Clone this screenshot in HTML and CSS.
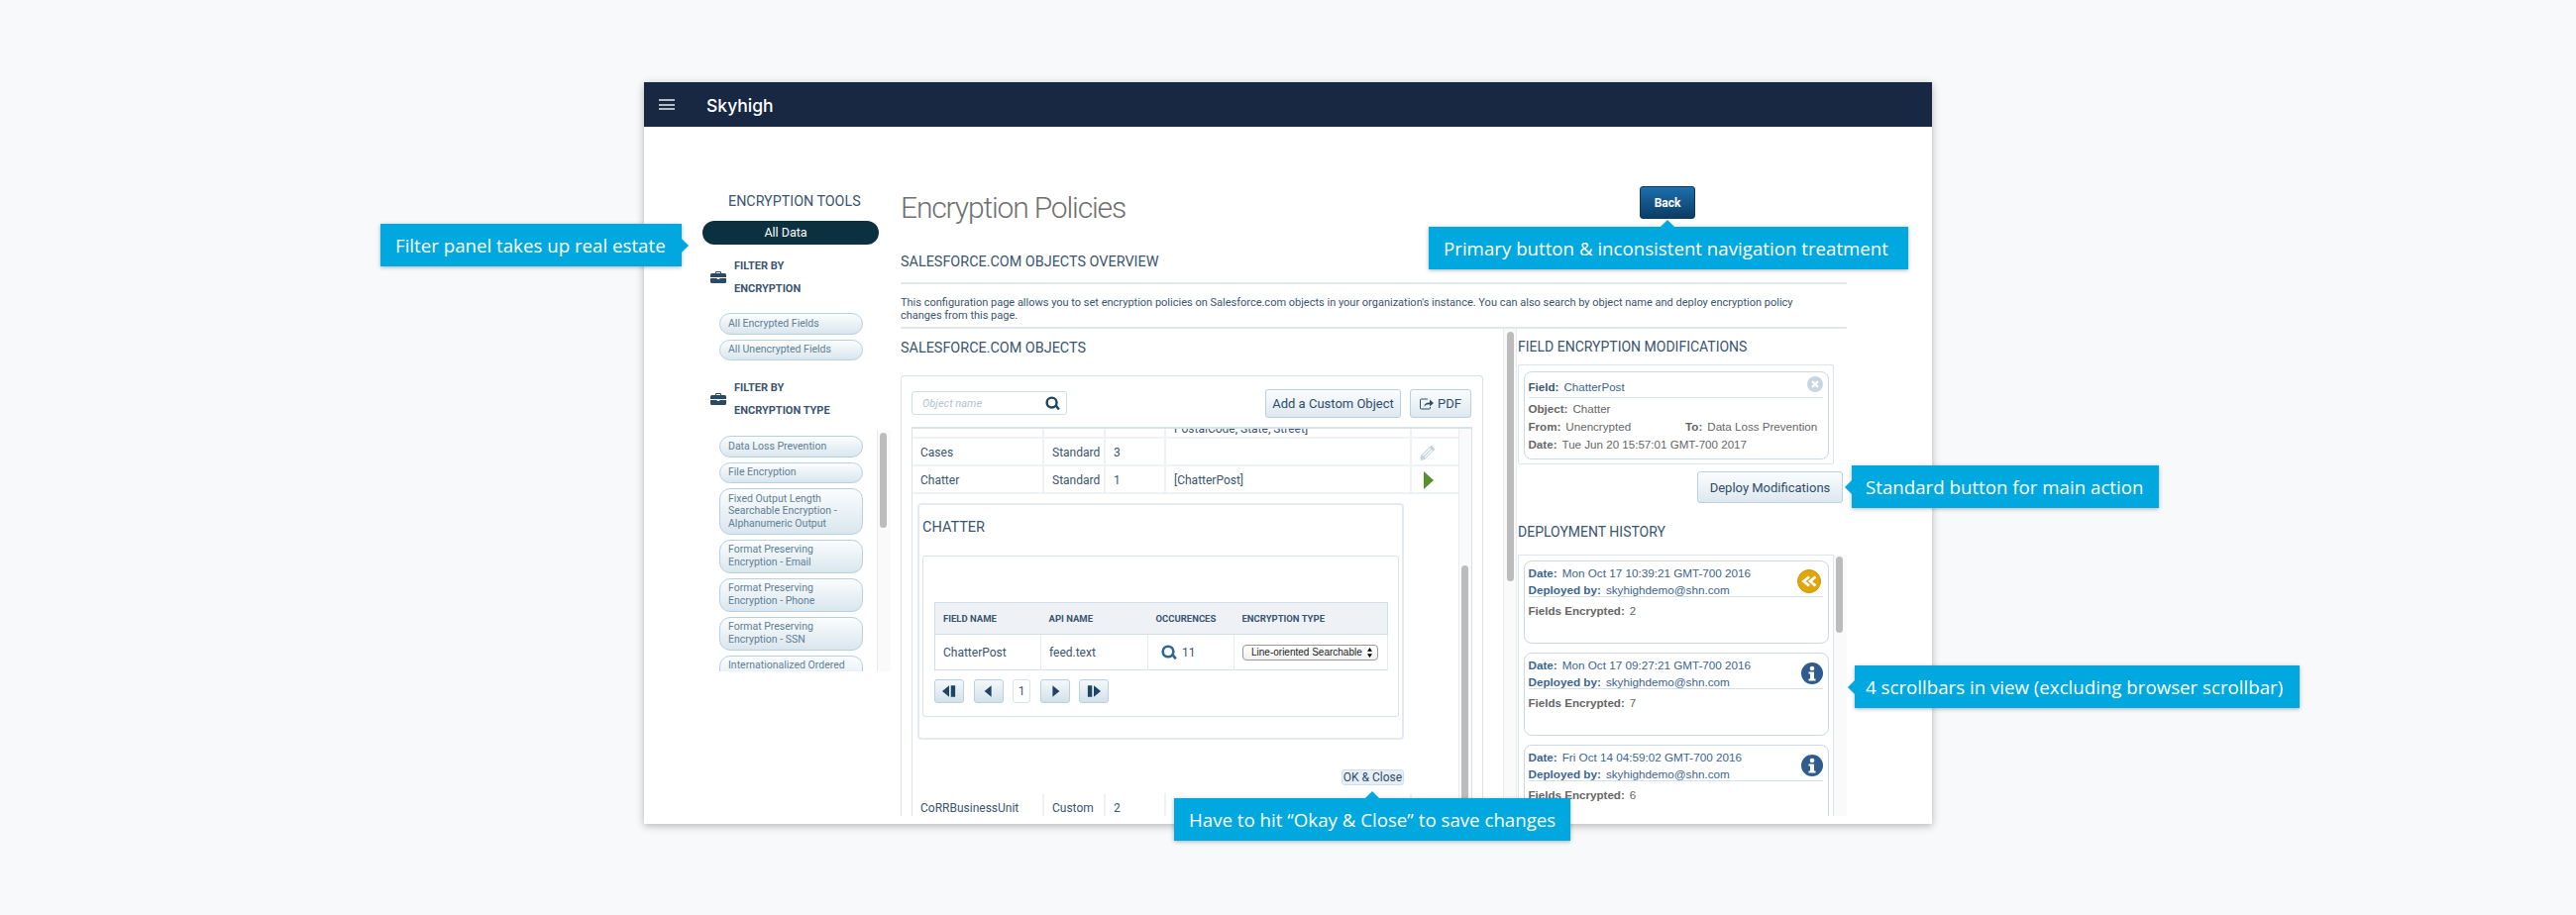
FILE: index.html
```html
<!DOCTYPE html>
<html lang="en">
<head>
    <meta charset="UTF-8">
    <title>Encryption Policies</title>
    <link rel="stylesheet" href="styles.css">
</head>
<body>
    <svg width="0" height="0" class="defs">
        <symbol id="case" viewBox="0 0 16 12"><path d="M5 2V1a1 1 0 0 1 1-1h4a1 1 0 0 1 1 1v1h3.500A1.500 1.500 0 0 1 16 3.500V6H0V3.500A1.500 1.500 0 0 1 1.500 2zM6 1v1h4V1zM0 7h6.800v1h2.400V7H16v3.500a1.500 1.500 0 0 1-1.500 1.500h-13A1.500 1.500 0 0 1 0 10.500z"/></symbol>
        <symbol id="search" viewBox="0 0 16 16"><circle cx="7" cy="7" r="5.300" fill="none" stroke="currentColor" stroke-width="2.600"/><path d="M10.500 11l2-1.800 3.300 4.300-2 1.800z"/></symbol>
        <symbol id="info" viewBox="0 0 22 22"><circle cx="11" cy="11" r="11" fill="#2f5c8c"/><circle cx="11" cy="6" r="2.300" fill="#fff"/><path d="M7.500 9.500h5.500v7h1.500v2h-7v-2H9v-5H7.500z" fill="#fff"/></symbol>
    </svg>

    <div class="window">
        <div class="topbar">
            <div class="burger"><i></i><i></i><i></i></div>
            <div class="brand">Skyhigh</div>
        </div>
        <div class="app">
            <!-- filters -->
            <div class="sidebar">
                <div class="side-title">ENCRYPTION TOOLS</div>
                <div class="all-data">All Data</div>
                <div class="filter-head">
                    <svg class="case"><use href="#case"/></svg>
                    <div>FILTER BY<br>ENCRYPTION</div>
                </div>
                <div class="chips first-chips">
                    <div class="chip">All Encrypted Fields</div>
                    <div class="chip">All Unencrypted Fields</div>
                </div>
                <div class="filter-head second">
                    <svg class="case"><use href="#case"/></svg>
                    <div>FILTER BY<br>ENCRYPTION TYPE</div>
                </div>
                <div class="side-scroll">
                    <div class="chips">
                        <div class="chip">Data Loss Prevention</div>
                        <div class="chip">File Encryption</div>
                        <div class="chip">Fixed Output Length<br>Searchable Encryption -<br>Alphanumeric Output</div>
                        <div class="chip">Format Preserving<br>Encryption - Email</div>
                        <div class="chip">Format Preserving<br>Encryption - Phone</div>
                        <div class="chip">Format Preserving<br>Encryption - SSN</div>
                        <div class="chip">Internationalized Ordered<br>Searchable Encryption</div>
                    </div>
                    <div class="track side-track"><div class="thumb"></div></div>
                </div>
            </div>

            <div class="main">
                <div class="main-head">
                    <h1>Encryption Policies</h1>
                    <button class="back">Back</button>
                </div>
                <h2 class="overview">SALESFORCE.COM OBJECTS OVERVIEW</h2>
                <p class="intro">This configuration page allows you to set encryption policies on Salesforce.com objects in your organization's instance. You can also search by object name and deploy encryption policy<br>changes from this page.</p>

                <div class="columns">
                    <div class="objects">
                        <h2>SALESFORCE.COM OBJECTS</h2>
                        <div class="panel">
                            <div class="toolbar">
                                <div class="search">
                                    <span>Object name</span>
                                    <svg><use href="#search"/></svg>
                                </div>
                                <button class="btn add">Add a Custom Object</button>
                                <button class="btn pdf">
                                    <svg viewBox="0 0 14 12"><path d="M10 4.500V1.500L14 5 10 8.500v-2.200c-3 0-4.500.8-5.500 2.500 0-3 2-4.300 5.500-4.300z" fill="#2f4d68"/><path d="M8 1H1.500A1 1 0 0 0 .5 2v8a1 1 0 0 0 1 1h8a1 1 0 0 0 1-1V9" fill="none" stroke="#2f4d68"/></svg>
                                    PDF
                                </button>
                            </div>
                            <div class="table-wrap">
                                <div class="table-scroll">
                                    <table class="objects-table">
                                        <colgroup><col class="c1"><col class="c2"><col class="c3"><col class="c4"><col class="c5"></colgroup>
                                        <tr class="cut">
                                            <td></td><td></td><td></td>
                                            <td><div class="cut-text"><span>PostalCode, State, Street]</span></div></td>
                                            <td></td>
                                        </tr>
                                        <tr>
                                            <td>Cases</td><td>Standard</td><td>3</td><td></td>
                                            <td><svg class="pencil" viewBox="0 0 16 16"><path d="M11.500.500l4 4L5 15 .500 16 1 11zM10.200 3.300L2.800 10.700l.9.9 7.400-7.400zM12 5l-7.400 7.400.9.900 7.400-7.400z" fill-rule="evenodd"/></svg></td>
                                        </tr>
                                        <tr>
                                            <td>Chatter</td><td>Standard</td><td>1</td><td>[ChatterPost]</td>
                                            <td><div class="play"></div></td>
                                        </tr>
                                        <tr>
                                            <td colspan="5" class="detail-cell">
                                                <div class="detail">
                                                    <h3>CHATTER</h3>
                                                    <div class="detail-inner">
                                                        <table class="fields">
                                                            <colgroup><col class="f1"><col class="f2"><col class="f3"><col class="f4"></colgroup>
                                                            <tr><th>FIELD NAME</th><th>API NAME</th><th>OCCURENCES</th><th>ENCRYPTION TYPE</th></tr>
                                                            <tr>
                                                                <td>ChatterPost</td>
                                                                <td>feed.text</td>
                                                                <td><div class="occ"><svg class="occ-icon"><use href="#search"/></svg>11</div></td>
                                                                <td><div class="select"><span>Line-oriented Searchable Encryption</span><svg viewBox="0 0 8 12"><path d="M4 0l3 4.500H1zM4 12L1 7.500h6z"/></svg></div></td>
                                                            </tr>
                                                        </table>
                                                        <div class="pager">
                                                            <button class="page"><svg viewBox="0 0 16 16"><path d="M8 1.500v13L0 8zM10 1.500h5v13h-5z"/></svg></button>
                                                            <button class="page"><svg viewBox="0 0 16 16"><path d="M11 1.500v13L3 8z"/></svg></button>
                                                            <div class="page-num">1</div>
                                                            <button class="page"><svg viewBox="0 0 16 16"><path d="M5 1.500v13L13 8z"/></svg></button>
                                                            <button class="page"><svg viewBox="0 0 16 16"><path d="M8 1.500v13L16 8zM1 1.500h5v13H1z"/></svg></button>
                                                        </div>
                                                    </div>
                                                </div>
                                                <div class="detail-foot"><button class="ok">OK &amp; Close</button></div>
                                            </td>
                                        </tr>
                                        <tr class="last">
                                            <td>CoRRBusinessUnit</td><td>Custom</td><td>2</td><td></td><td></td>
                                        </tr>
                                    </table>
                                </div>
                                <div class="track table-track"><div class="thumb"></div></div>
                            </div>
                        </div>
                    </div>

                    <div class="track mid-track"><div class="thumb"></div></div>

                    <div class="right">
                        <h3 class="right-title">FIELD ENCRYPTION MODIFICATIONS</h3>
                        <div class="mod-box">
                            <div class="card mod-card">
                                <div class="mod-head">
                                    <b>Field:</b><span class="blue">ChatterPost</span>
                                    <svg class="close" viewBox="0 0 16 16"><circle cx="8" cy="8" r="8" fill="#c8d6e1"/><path d="M5 5l6 6M11 5l-6 6" stroke="#fff" stroke-width="2.400"/></svg>
                                </div>
                                <div class="line"><b>Object:</b><span>Chatter</span></div>
                                <div class="line split">
                                    <div><b>From:</b><span>Unencrypted</span></div>
                                    <div class="to"><b>To:</b><span>Data Loss Prevention</span></div>
                                </div>
                                <div class="line"><b>Date:</b><span>Tue Jun 20 15:57:01 GMT-700 2017</span></div>
                            </div>
                        </div>
                        <button class="btn deploy">Deploy Modifications</button>

                        <h3 class="right-title history-title">DEPLOYMENT HISTORY</h3>
                        <div class="history">
                            <div class="history-box">
                                <div class="card hist">
                                    <div class="hist-head">
                                        <div><b>Date:</b><span>Mon Oct 17 10:39:21 GMT-700 2016</span></div>
                                        <div><b>Deployed by:</b><span>skyhighdemo@shn.com</span></div>
                                        <svg class="rollback" viewBox="0 0 24 24"><circle cx="12" cy="12" r="11.500" fill="#e0a60a" stroke="#c99507"/><path d="M12 7.500L6.500 12l5.500 4.500M18.500 7.500L13 12l5.500 4.500" fill="none" stroke="#fff" stroke-width="2.800"/></svg>
                                    </div>
                                    <div class="line"><b>Fields Encrypted:</b><span>2</span></div>
                                </div>
                                <div class="card hist">
                                    <div class="hist-head">
                                        <div><b>Date:</b><span>Mon Oct 17 09:27:21 GMT-700 2016</span></div>
                                        <div><b>Deployed by:</b><span>skyhighdemo@shn.com</span></div>
                                        <svg class="info"><use href="#info"/></svg>
                                    </div>
                                    <div class="line"><b>Fields Encrypted:</b><span>7</span></div>
                                </div>
                                <div class="card hist">
                                    <div class="hist-head">
                                        <div><b>Date:</b><span>Fri Oct 14 04:59:02 GMT-700 2016</span></div>
                                        <div><b>Deployed by:</b><span>skyhighdemo@shn.com</span></div>
                                        <svg class="info"><use href="#info"/></svg>
                                    </div>
                                    <div class="line"><b>Fields Encrypted:</b><span>6</span></div>
                                </div>
                            </div>
                            <div class="track hist-track"><div class="thumb"></div></div>
                        </div>
                    </div>
                </div>
            </div>
        </div>
    </div>

    <!-- annotations -->
    <div class="callout tip-right c-filter">Filter panel takes up real estate</div>
    <div class="callout tip-up c-primary">Primary button &amp; inconsistent navigation treatment</div>
    <div class="callout tip-left c-standard">Standard button for main action</div>
    <div class="callout tip-left c-scroll">4 scrollbars in view (excluding browser scrollbar)</div>
    <div class="callout tip-up c-okay">Have to hit “Okay &amp; Close” to save changes</div>
</body>
</html>
```

FILE: styles.css
```css
* {
    box-sizing: border-box;
}

html, body {
    height: 924px;
    overflow: hidden;
}

body {
    margin: 0;
    background-color: #f8f9fb;
    font-family: 'Roboto', sans-serif;
    color: #3a5570;
}

.defs {
    position: absolute;
}

button {
    font-family: 'Roboto', sans-serif;
    padding: 0;
}

h1, h2, h3, p {
    margin: 0;
    font-weight: 400;
}

/* window */
.window {
    width: 1300px;
    height: 749px;
    margin: 83px 0 0 650px;
    background-color: white;
    box-shadow: 0 2px 8px rgba(0,0,0,0.28);
}

.topbar {
    display: flex;
    align-items: center;
    height: 45px;
    padding-left: 15px;
    background-color: #182842;
}

.burger {
    display: flex;
    flex-direction: column;
    gap: 2.500px;
    width: 16px;
    margin-right: 32px;
}

.burger i {
    display: block;
    height: 2px;
    background-color: #b4bcc8;
}

.brand {
    margin-top: 1px;
    font-family: 'Inter', sans-serif;
    font-size: 17.500px;
    font-weight: 500;
    color: white;
}

.app {
    display: flex;
    height: 704px;
}

/* sidebar */
.sidebar {
    width: 259px;
    padding: 65px 0 0 59px;
    flex: none;
}

.side-title {
    height: 20px;
    margin-left: 26px;
    font-size: 14.300px;
    line-height: 20px;
}

.all-data {
    width: 178px;
    height: 24px;
    margin-top: 10px;
    padding-right: 10px;
    border-radius: 12px;
    background-color: #0b3141;
    color: white;
    font-size: 12.500px;
    line-height: 24px;
    text-align: center;
}

.filter-head {
    display: flex;
    align-items: center;
    gap: 8px;
    margin: 10px 0 0 8px;
    font-size: 11px;
    font-weight: 700;
    line-height: 23px;
}

.filter-head.second {
    margin-top: 16px;
}

.case {
    width: 16px;
    height: 12px;
    fill: #2b4a66;
}

.chips {
    display: flex;
    flex-direction: column;
    gap: 5px;
    width: 145px;
    margin-left: 17px;
    flex: none;
}

.first-chips {
    margin-top: 13px;
    margin-bottom: 1px;
}

.chip {
    padding: 3.500px 8px;
    border: 1px solid #b7d0e0;
    border-radius: 11px;
    background: linear-gradient(#fbfdfe, #d9e6ee);
    color: #627f94;
    font-size: 10.500px;
    line-height: 12.500px;
}

.side-scroll {
    display: flex;
    align-items: flex-start;
    height: 244px;
    margin-top: 8px;
    overflow: hidden;
}

.side-scroll .chips {
    padding-top: 6px;
}

.track {
    flex: none;
    width: 14px;
    background-color: #fafafa;
    border-left: 1px solid #e8ecef;
}

.thumb {
    width: 7px;
    margin-left: 2px;
    border-radius: 4px;
    background-color: #bcbcbc;
}

.side-track {
    height: 244px;
    margin-left: 14px;
    padding-top: 3px;
}

.side-track .thumb {
    height: 96px;
}

/* main */
.main {
    width: 955px;
}

.main-head {
    display: flex;
    justify-content: space-between;
    align-items: flex-start;
    height: 112px;
    padding: 60px 153px 0 0;
}

h1 {
    margin-top: 3px;
    font-size: 30px;
    font-weight: 300;
    line-height: 38px;
    letter-spacing: -1.150px;
    color: #707070;
}

.back {
    width: 56px;
    height: 33px;
    border: 1px solid #0b3a5f;
    border-radius: 3px;
    background: linear-gradient(#1b6fae, #0c3c64);
    color: white;
    font-size: 12px;
    font-weight: 700;
}

h2 {
    font-size: 14.400px;
    line-height: 20px;
}

.overview {
    margin-top: 15px;
    height: 32px;
    border-bottom: 2px solid #e3e7ea;
}

.intro {
    height: 45px;
    padding-top: 12px;
    border-bottom: 2px solid #e3e7ea;
    font-size: 11px;
    line-height: 13px;
}

.columns {
    display: flex;
    height: 492px;
}

/* objects panel */
.objects {
    width: 608px;
    padding-top: 10px;
}

.panel {
    width: 588px;
    height: 445px;
    margin-top: 17px;
    padding: 13px 11px 0 10px;
    border: 1px solid #d7e2ea;
    border-bottom: 0;
    border-radius: 4px 4px 0 0;
}

.toolbar {
    display: flex;
    align-items: flex-start;
}

.search {
    display: flex;
    justify-content: space-between;
    align-items: center;
    width: 157px;
    height: 24px;
    margin: 2px 200px 0 0;
    padding: 0 6px 0 10px;
    border: 1px solid #cfdde7;
    border-radius: 3px;
    color: #b5c4d0;
    font-size: 11px;
    font-style: italic;
}

.search svg {
    width: 15px;
    height: 15px;
    fill: #21435f;
    color: #21435f;
}

.btn {
    border: 1px solid #b9d0df;
    border-radius: 3px;
    background: linear-gradient(#fbfdfe, #dde8ef);
    color: #2f4d68;
    font-size: 13px;
}

.add {
    width: 137px;
    height: 29px;
}

.pdf {
    display: flex;
    justify-content: center;
    align-items: center;
    gap: 4px;
    width: 62px;
    height: 29px;
    margin-left: 9px;
}

.pdf svg {
    width: 14px;
    height: 12px;
}

.table-wrap {
    display: flex;
    width: 566px;
    height: 393px;
    margin-top: 9px;
    border-top: 2px solid #d7e2ea;
    border-left: 1px solid #d7e2ea;
    border-right: 1px solid #d7e2ea;
    overflow: hidden;
}

.table-scroll {
    width: 551px;
    flex: none;
}

.objects-table {
    width: 551px;
    border-collapse: collapse;
    table-layout: fixed;
    font-size: 12px;
}

.c1 { width: 132px; }
.c2 { width: 62px; }
.c3 { width: 61px; }
.c4 { width: 248px; }
.c5 { width: 48px; }

.objects-table > tbody > tr > td {
    height: 28px;
    padding: 2px 0 0 8px;
    border-right: 2px solid #eef2f5;
    border-bottom: 2px solid #eef2f5;
}

.objects-table > tbody > tr > td:last-child {
    border-right: 0;
}

.objects-table > tbody > .cut > td {
    height: 9px;
    padding-top: 0;
}

.cut-text {
    height: 8px;
    overflow: hidden;
}

.cut-text span {
    display: block;
    margin-top: -8px;
    line-height: 16px;
}

.pencil {
    display: block;
    width: 16px;
    height: 16px;
    fill: #c6d3dd;
}

.play {
    width: 0;
    height: 0;
    margin-left: 4px;
    border-left: 10px solid #5a8f2e;
    border-top: 9px solid transparent;
    border-bottom: 9px solid transparent;
}

.objects-table > tbody > tr > .detail-cell {
    height: auto;
    padding: 9px 55px 8px 4.500px;
    border-right: 0;
    border-bottom: 0;
}

.detail {
    height: 239px;
    padding: 0 3.500px;
    border: 2px solid #e4ebf0;
    border-radius: 4px;
}

.detail h3 {
    height: 51px;
    font-size: 14.500px;
    line-height: 46px;
}

.detail-inner {
    height: 163px;
    padding: 46px 11px 0;
    border: 1px solid #d7e2ea;
    border-radius: 3px;
}

.fields {
    width: 457px;
    border-collapse: collapse;
    table-layout: fixed;
    border: 1px solid #d3dfe8;
}

.f1 { width: 107px; }
.f2 { width: 108px; }
.f3 { width: 87px; }
.f4 { width: 155px; }

.fields th {
    height: 32px;
    padding: 0 0 0 8px;
    background-color: #eef2f6;
    border-bottom: 1px solid #d3dfe8;
    font-size: 9.500px;
    font-weight: 700;
    text-align: left;
}

.fields td {
    height: 36px;
    padding: 0 0 0 8px;
    border-right: 1px solid #e6ecf1;
}

.occ {
    display: flex;
    align-items: center;
    gap: 5px;
    padding-left: 5px;
}

.occ-icon {
    width: 16px;
    height: 16px;
    fill: #2c6597;
    color: #2c6597;
}

.select {
    display: flex;
    align-items: center;
    justify-content: space-between;
    width: 137px;
    height: 16px;
    padding: 0 4px 0 8px;
    border: 1px solid #9a9a9a;
    border-radius: 4px;
    background: linear-gradient(#fff, #f1f1f1);
    font-family: 'Liberation Sans', sans-serif;
    font-size: 10px;
    color: #222;
}

.select span {
    width: 112px;
    overflow: hidden;
    white-space: nowrap;
}

.select svg {
    width: 7px;
    height: 10px;
}

.pager {
    display: flex;
    gap: 9.500px;
    margin-top: 9px;
}

.page {
    display: flex;
    justify-content: center;
    align-items: center;
    width: 30px;
    height: 24px;
    border: 1px solid #b9d0df;
    border-radius: 3px;
    background: linear-gradient(#f4f8fa, #d3e1ea);
}

.page svg {
    width: 14px;
    height: 14px;
    fill: #1f4464;
}

.page-num {
    width: 18px;
    height: 24px;
    border: 1px solid #d7e2ea;
    border-radius: 3px;
    font-size: 12px;
    line-height: 22px;
    text-align: center;
}

.detail-foot {
    display: flex;
    justify-content: flex-end;
    padding-top: 30px;
}

.ok {
    width: 63px;
    height: 16px;
    border: 1px solid #cfe0ea;
    border-radius: 3px;
    background-color: #e6eff5;
    color: #2f4d68;
    font-size: 12px;
    line-height: 14px;
    white-space: nowrap;
}

.table-track {
    width: 14px;
    padding-top: 138px;
}

.table-track .thumb {
    height: 260px;
}

.mid-track {
    width: 14px;
    height: 492px;
    border-right: 1px solid #e8ecef;
    padding-top: 3px;
}

.mid-track .thumb {
    height: 252px;
    margin-left: 3px;
}

/* right column */
.right {
    width: 333px;
    padding-top: 8px;
    font-family: 'Liberation Sans', sans-serif;
    font-size: 11.600px;
    color: #666;
}

.right-title {
    height: 20px;
    padding-left: 1px;
    font-family: 'Roboto', sans-serif;
    font-size: 14px;
    line-height: 20px;
    color: #3a5570;
}

.mod-box {
    width: 319px;
    height: 101px;
    margin: 8px 0 0 1px;
    padding: 6px 5px;
    border: 1px solid #dbe5ec;
    border-radius: 2px;
}

.card {
    width: 308px;
    border: 1px solid #c9dae6;
    border-radius: 8px;
    padding: 0 5px 0 3.500px;
}

.mod-card {
    height: 89px;
}

.card b {
    margin-right: 5px;
}

.line {
    height: 18px;
    line-height: 18px;
}

.mod-head {
    display: flex;
    align-items: center;
    height: 26px;
    margin-bottom: 2px;
    padding-top: 4px;
    border-bottom: 1px solid #d9e3ea;
}

.blue {
    color: #3b6590;
}

.mod-head b {
    color: #3a5570;
}

.close {
    width: 16px;
    height: 16px;
    margin: -6px 0 0 auto;
}

.split {
    display: flex;
}

.to {
    margin-left: 55px;
}

.deploy {
    display: block;
    width: 147px;
    height: 32px;
    margin: 7px 0 0 182px;
    font-family: 'Roboto', sans-serif;
}

.history-title {
    margin-top: 19px;
}

.history {
    display: flex;
    height: 264px;
    margin: 13px 0 0 1px;
    overflow: hidden;
}

.history-box {
    display: flex;
    flex-direction: column;
    gap: 9px;
    width: 319px;
    padding: 5px;
    border: 1px solid #dbe5ec;
    border-bottom: 0;
    flex: none;
}

.hist {
    height: 84px;
    flex: none;
    padding-top: 3px;
}

.hist-head {
    height: 33px;
    margin-bottom: 5px;
    border-bottom: 1px solid #d3e0e9;
    color: #3b6590;
    line-height: 17px;
    font-size: 11.700px;
    position: relative;
}

.rollback, .info {
    position: absolute;
    top: 5px;
}

.rollback {
    right: 2px;
    width: 24px;
    height: 24px;
}

.info {
    right: 0;
    width: 22px;
    height: 22px;
    top: 6px;
}

.hist-track {
    width: 13px;
    height: 264px;
    padding-top: 2px;
    border-left: 0;
}

.hist-track .thumb {
    height: 77px;
}

/* annotations */
.callout {
    position: absolute;
    display: flex;
    align-items: center;
    height: 43px;
    padding: 0 15px;
    background-color: #00a8e0;
    box-shadow: 0 1px 4px rgba(0,0,0,0.3);
    font-family: 'Open Sans', sans-serif;
    font-size: 18.700px;
    font-weight: 500;
    color: white;
    white-space: nowrap;
}

.callout::after {
    content: "";
    position: absolute;
    width: 10px;
    height: 10px;
    background-color: #00a8e0;
    transform: rotate(45deg);
}

.tip-right::after {
    right: -5px;
    top: 17px;
}

.tip-left::after {
    left: -5px;
    top: 17px;
}

.tip-up::after {
    top: -5px;
}

.c-filter {
    left: 384px;
    top: 226px;
    width: 304px;
}

.c-primary {
    left: 1442px;
    top: 229px;
    width: 484px;
}

.c-primary::after {
    left: 236px;
}

.c-standard {
    left: 1869px;
    top: 470px;
    width: 310px;
    padding-left: 14px;
}

.c-scroll {
    left: 1872px;
    top: 672px;
    width: 449px;
    padding-left: 11px;
}

.c-okay {
    left: 1185px;
    top: 806px;
    width: 400px;
}

.c-okay::after {
    left: 195px;
}
```
